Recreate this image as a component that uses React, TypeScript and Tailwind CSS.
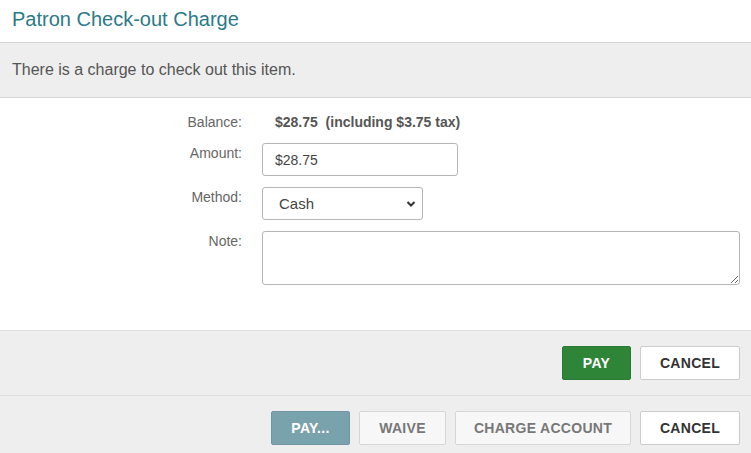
import React from "react";

export default function App() {
  return (
    <div className="w-[751px] h-[453px] overflow-hidden bg-white font-['Liberation_Sans',Arial,sans-serif]">
      <div className="h-[43px] border-b border-[#d6d6d6] px-[12px] flex items-center">
        <h1 className="text-[20px] text-[#2b7a88] leading-none -mt-[4px]">Patron Check-out Charge</h1>
      </div>
      <div className="h-[55px] bg-[#eeeeee] border-b border-[#d6d6d6] px-[12px] flex items-center">
        <p className="text-[16px] text-[#555555]">There is a charge to check out this item.</p>
      </div>
      <div className="h-[232px] pt-[14px] flex flex-col gap-[11px]">
        <div className="flex items-start">
          <div className="w-[242px] text-right text-[14px] text-[#666] leading-[20px]">Balance:</div>
          <div className="ml-[33px] text-[14px] font-bold text-[#555] leading-[20px] whitespace-pre">$28.75  (including $3.75 tax)</div>
        </div>
        <div className="flex items-start">
          <div className="w-[242px] text-right text-[14px] text-[#666] leading-[20px]">Amount:</div>
          <input
            className="ml-[20px] w-[196px] h-[33px] border border-[#b5b5b5] rounded-[3px] px-[12px] text-[14px] text-[#444] outline-none"
            defaultValue="$28.75"
          />
        </div>
        <div className="flex items-start">
          <div className="w-[242px] text-right text-[14px] text-[#666] leading-[20px]">Method:</div>
          <div className="ml-[20px] w-[161px] h-[33px] border border-[#b5b5b5] rounded-[3px] pl-[16px] pr-[6px] flex items-center justify-between text-[15px] text-[#444]">
            <span className="mt-[2px]">Cash</span>
            <svg width="10" height="8" viewBox="0 0 10 8">
              <path d="M1.5 2 L5 5.5 L8.5 2" fill="none" stroke="#333" strokeWidth="2" />
            </svg>
          </div>
        </div>
        <div className="flex items-start">
          <div className="w-[242px] text-right text-[14px] text-[#666] leading-[20px]">Note:</div>
          <textarea className="ml-[20px] w-[478px] h-[54px] border border-[#b5b5b5] rounded-[3px] outline-none resize-y" />
        </div>
      </div>
      <div className="h-[66px] bg-[#eeeeee] border-t border-[#dedede] border-b flex items-center justify-end gap-[9px] pr-[11px]">
        <button className="w-[69px] h-[34px] bg-[#2e8538] border border-[#2a7a33] rounded-[2px] text-white text-[14px] font-bold tracking-[0.3px]">PAY</button>
        <button className="w-[100px] h-[34px] bg-white border border-[#cccccc] rounded-[2px] text-[#333] text-[14px] font-bold tracking-[0.3px]">CANCEL</button>
      </div>
      <div className="h-[57px] bg-[#eeeeee] flex items-start pt-[15px] justify-end gap-[9px] pr-[11px]">
        <button className="w-[79px] h-[34px] bg-[#79a2ac] border border-[#6e97a1] rounded-[2px] text-white text-[14px] font-bold tracking-[0.3px]">PAY...</button>
        <button className="w-[87px] h-[34px] bg-[#f7f7f7] border border-[#d6d6d6] rounded-[2px] text-[#777] text-[14px] font-bold tracking-[0.3px]">WAIVE</button>
        <button className="w-[176px] h-[34px] bg-[#f7f7f7] border border-[#d6d6d6] rounded-[2px] text-[#777] text-[14px] font-bold tracking-[0.3px]">CHARGE ACCOUNT</button>
        <button className="w-[100px] h-[34px] bg-white border border-[#cccccc] rounded-[2px] text-[#333] text-[14px] font-bold tracking-[0.3px]">CANCEL</button>
      </div>
    </div>
  );
}
